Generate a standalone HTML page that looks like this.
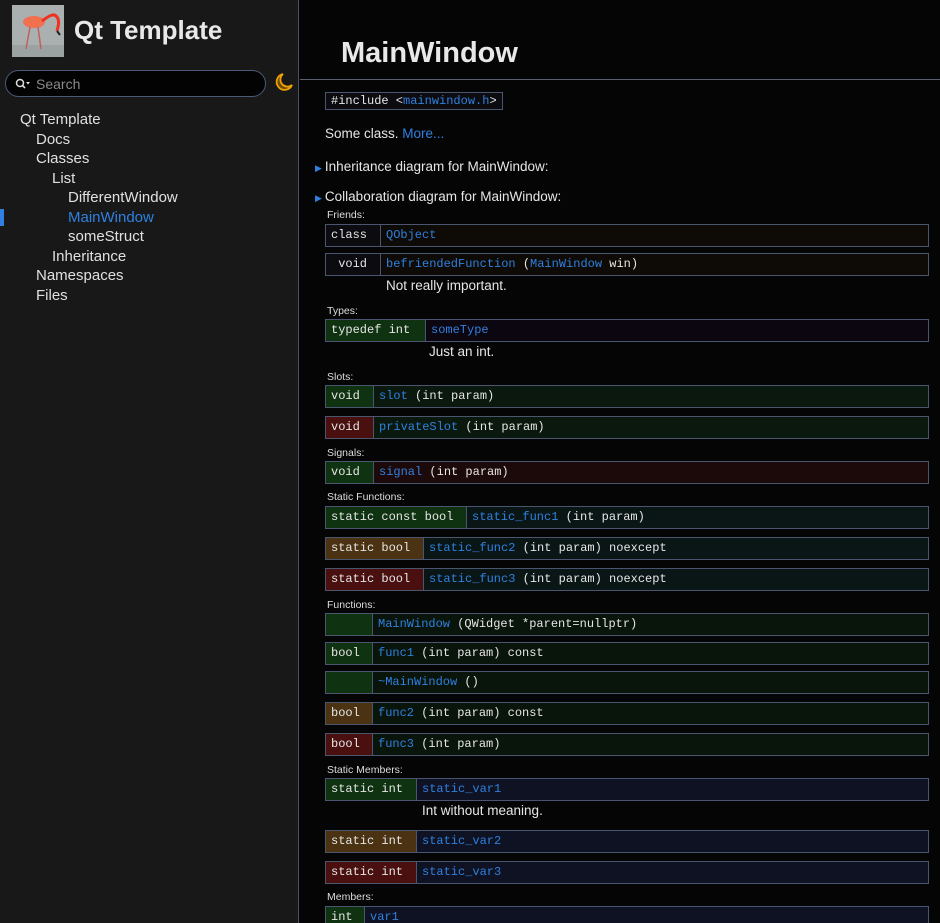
<!DOCTYPE html>
<html><head><meta charset="utf-8"><style>
*{margin:0;padding:0;box-sizing:border-box}
html,body{width:940px;height:923px;overflow:hidden}
body{background:#050505;font-family:"Liberation Sans",sans-serif;color:#e6e6e6;position:relative}
#side{position:absolute;left:0;top:0;width:299px;height:923px;background:#181818;border-right:1px solid #4a5060}
.logo{position:absolute;left:12px;top:5px;width:52px;height:52px;background:linear-gradient(#9aa0a0,#b8bcbc);overflow:hidden}
.title{position:absolute;left:74px;top:15px;font-size:26px;font-weight:bold;color:#e8e8e8}
.search{position:absolute;left:5px;top:70px;width:261px;height:27px;border:1px solid #4a5a78;border-radius:14px;background:#030303}
.search span{position:absolute;left:30px;top:5px;font-size:14px;color:#8a8a8a}
.nav{position:absolute;font-size:15px;color:#e0e0e0}
#main{position:absolute;left:300px;top:0;width:640px;height:923px;overflow:hidden}
h1{position:absolute;left:41px;top:37px;font-size:29px;font-weight:bold;color:#e8e8e8}
.hr{position:absolute;left:0;top:79px;width:640px;height:1px;background:#5a6070}
.t{position:absolute;font-size:13.5px;color:#e6e6e6}
.lbl{position:absolute;left:27px;font-size:10.5px;color:#ddd}
a,.l{color:#2f80e0;text-decoration:none}
.row{position:absolute;left:25px;width:604px;height:23px;border:1px solid #4a5570;display:flex;font-family:"Liberation Mono",monospace;font-size:12px}
.row .a{border-right:1px solid #4a5570;padding:3px 5px;white-space:pre;height:21px}
.row .b{padding:3px 5px;white-space:pre}
.g{background:#0f3211}.o{background:#4a3212}.r{background:#4a1010}
.fr{background:#0e0a06}.ty{background:#0c0610}.sl{background:#0a180e}.si{background:#1c0a0a}.sf{background:#0a1616}.fn{background:#09150b}.sm{background:#0e1222}
.code{font-family:"Liberation Mono",monospace}
.tri{color:#2f80e0;font-size:9px;margin-right:3px}
</style></head><body>
<div id="side">
<div class="logo">
<svg width="52" height="52"><rect width="52" height="52" fill="#aab0b0"/><rect y="40" width="52" height="12" fill="#9aa2a2"/><ellipse cx="22" cy="17" rx="11" ry="6" fill="#f07050"/><path d="M30 16 C38 10 42 8 45 12 C48 16 46 22 45 26" stroke="#f03020" stroke-width="3" fill="none"/><path d="M45 26 l3 4" stroke="#222" stroke-width="2"/><path d="M18 22 L14 44 M26 22 L29 44" stroke="#c06060" stroke-width="1.5"/></svg>
</div>
<div class="title">Qt Template</div>
<div class="search"><svg style="position:absolute;left:9px;top:7px" width="16" height="12"><circle cx="5" cy="5" r="3.5" stroke="#ddd" stroke-width="1.5" fill="none"/><path d="M7.5 7.5 L10 10" stroke="#ddd" stroke-width="1.6"/><path d="M11 4 h4 l-2 2.5z" fill="#ddd"/></svg><span>Search</span></div>
<svg style="position:absolute;left:274px;top:72px" width="20" height="20"><path d="M9 2 A8 8 0 1 0 18 13 A6.5 6.5 0 0 1 9 2z" fill="#6a4a0a" stroke="#f0a000" stroke-width="1.8"/></svg>
<div class="nav" style="left:20px;top:111px">Qt Template</div>
<div class="nav" style="left:36px;top:131px">Docs</div>
<div class="nav" style="left:36px;top:150px">Classes</div>
<div class="nav" style="left:52px;top:170px">List</div>
<div class="nav" style="left:68px;top:189px">DifferentWindow</div>
<div style="position:absolute;left:0;top:209px;width:4px;height:17px;background:#2f80e0"></div>
<div class="nav" style="left:68px;top:209px;color:#2f80e0">MainWindow</div>
<div class="nav" style="left:68px;top:228px">someStruct</div>
<div class="nav" style="left:52px;top:248px">Inheritance</div>
<div class="nav" style="left:36px;top:267px">Namespaces</div>
<div class="nav" style="left:36px;top:287px">Files</div>
</div>
<div id="main">
<h1>MainWindow</h1><div class="hr"></div>
<div class="t code" style="left:25px;top:92px;border:1px solid #4a5570;background:#0c0c10;padding:1px 5px;font-size:12px">#include &lt;<span class="l">mainwindow.h</span>&gt;</div>
<div class="t" style="left:25px;top:126px">Some class. <a>More...</a></div>
<div class="t" style="left:15px;top:159px"><span class="tri">&#9654;</span>Inheritance diagram for MainWindow:</div>
<div class="t" style="left:15px;top:189px"><span class="tri">&#9654;</span>Collaboration diagram for MainWindow:</div>

<div class="lbl" style="top:209px">Friends:</div>
<div class="row fr" style="top:224px"><div class="a" style="width:55px;background:#0c0c10">class</div><div class="b l">QObject</div></div>
<div class="row fr" style="top:253px"><div class="a" style="width:55px;background:#0c0c10"> void</div><div class="b"><span class="l">befriendedFunction</span> (<span class="l">MainWindow</span> win)</div></div>
<div class="t" style="left:86px;top:278px">Not really important.</div>

<div class="lbl" style="top:305px">Types:</div>
<div class="row ty" style="top:319px"><div class="a g" style="width:100px">typedef int</div><div class="b l">someType</div></div>
<div class="t" style="left:129px;top:344px">Just an int.</div>

<div class="lbl" style="top:371px">Slots:</div>
<div class="row sl" style="top:385px"><div class="a g" style="width:48px">void</div><div class="b"><span class="l">slot</span> (int param)</div></div>
<div class="row sl" style="top:416px"><div class="a r" style="width:48px">void</div><div class="b"><span class="l">privateSlot</span> (int param)</div></div>

<div class="lbl" style="top:447px">Signals:</div>
<div class="row si" style="top:461px"><div class="a g" style="width:48px">void</div><div class="b"><span class="l">signal</span> (int param)</div></div>

<div class="lbl" style="top:491px">Static Functions:</div>
<div class="row sf" style="top:506px"><div class="a g" style="width:141px">static const bool</div><div class="b"><span class="l">static_func1</span> (int param)</div></div>
<div class="row sf" style="top:537px"><div class="a o" style="width:98px">static bool</div><div class="b"><span class="l">static_func2</span> (int param) noexcept</div></div>
<div class="row sf" style="top:568px"><div class="a r" style="width:98px">static bool</div><div class="b"><span class="l">static_func3</span> (int param) noexcept</div></div>

<div class="lbl" style="top:599px">Functions:</div>
<div class="row fn" style="top:613px"><div class="a g" style="width:47px"></div><div class="b"><span class="l">MainWindow</span> (QWidget *parent=nullptr)</div></div>
<div class="row fn" style="top:642px"><div class="a g" style="width:47px">bool</div><div class="b"><span class="l">func1</span> (int param) const</div></div>
<div class="row fn" style="top:671px"><div class="a g" style="width:47px"></div><div class="b"><span class="l">~MainWindow</span> ()</div></div>
<div class="row fn" style="top:702px"><div class="a o" style="width:47px">bool</div><div class="b"><span class="l">func2</span> (int param) const</div></div>
<div class="row fn" style="top:733px"><div class="a r" style="width:47px">bool</div><div class="b"><span class="l">func3</span> (int param)</div></div>

<div class="lbl" style="top:764px">Static Members:</div>
<div class="row sm" style="top:778px"><div class="a g" style="width:91px">static int</div><div class="b l">static_var1</div></div>
<div class="t" style="left:122px;top:803px">Int without meaning.</div>
<div class="row sm" style="top:830px"><div class="a o" style="width:91px">static int</div><div class="b l">static_var2</div></div>
<div class="row sm" style="top:861px"><div class="a r" style="width:91px">static int</div><div class="b l">static_var3</div></div>

<div class="lbl" style="top:891px">Members:</div>
<div class="row sm" style="top:906px"><div class="a g" style="width:39px">int</div><div class="b l">var1</div></div>
</div>
</body></html>
